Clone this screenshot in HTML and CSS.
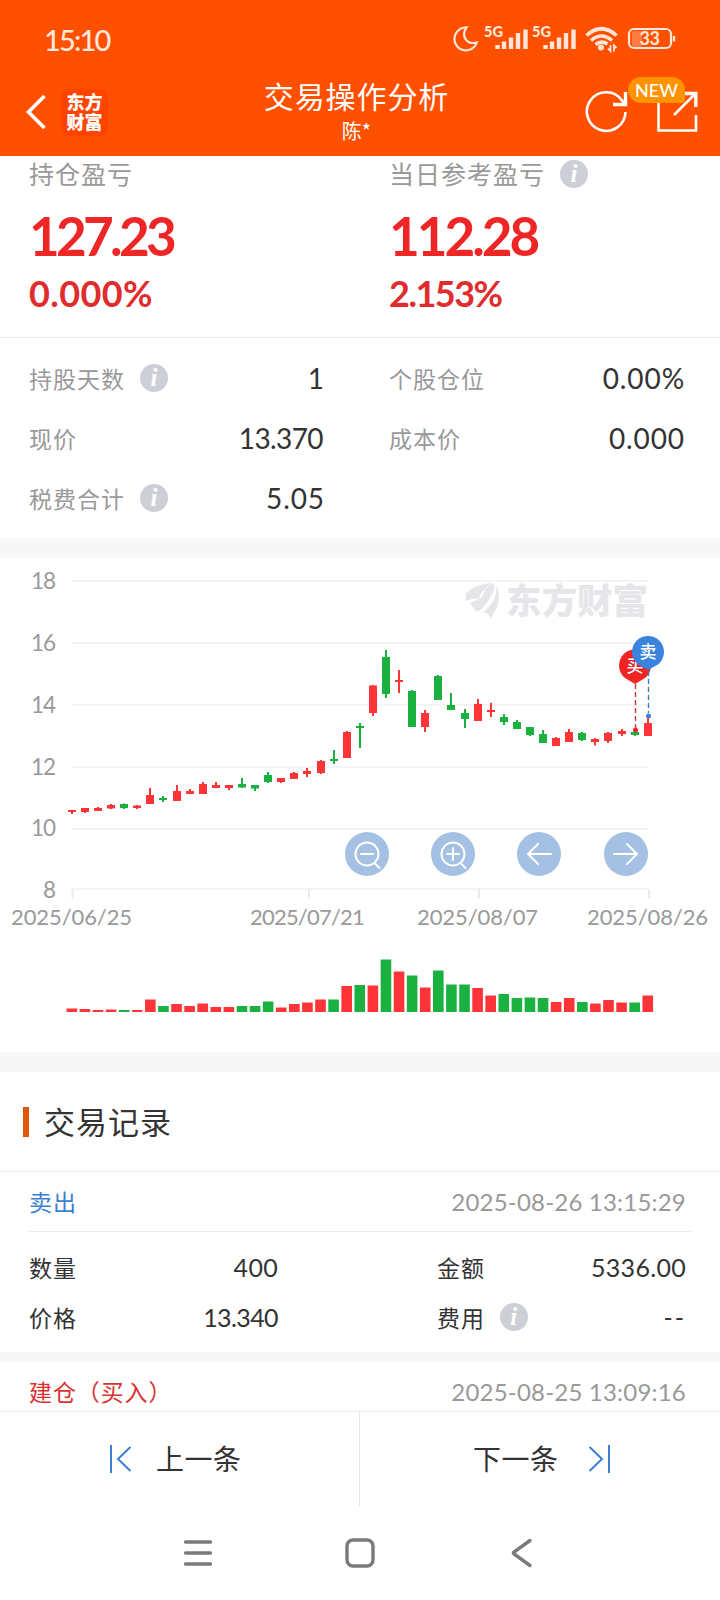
FILE: index.html
```html
<!DOCTYPE html>
<html lang="zh-CN">
<head>
  <meta charset="UTF-8">
  <meta name="viewport" content="width=device-width, initial-scale=1.0">
  <title>交易操作分析</title>
  <link rel="stylesheet" href="styles.css">
</head>
<body>
  <header class="header">
    <div class="status-bar">
      <span class="clock">15:10</span>
      <svg class="status-icons" viewBox="450 18 228 42" width="228" height="42">
        <path class="line" d="M464.500 27.500 A11.500 11.500 0 1 0 476.800 42.500 C467 45 460.500 36.500 466.500 27.300 Z"/>
        <text class="net" x="484" y="37">5G</text>
        <path class="bars" d="M497.500 45V49M504 41.500V49M511 37.500V49M518 33V49M525.500 29.500V49"/>
        <text class="net" x="532" y="37">5G</text>
        <path class="bars" d="M545.500 45V49M552 41.500V49M559 37.500V49M566 33V49M573.500 29.500V49"/>
        <path class="wifi" d="M586.500 35.500Q601.500 22 616.500 35.500M591 40.500Q601.500 31.500 612 40.500M595.500 44.500Q601.500 40 607.500 44"/>
        <circle class="solid" cx="601" cy="47.500" r="3"/>
        <path class="arrows" d="M610.500 45V51L608 48.500M614 51.500V45.500L616.500 48"/>
        <rect class="solid dim" x="632" y="31" width="10" height="16" rx="3"/>
        <rect class="battery" x="629" y="29" width="42" height="19" rx="5"/>
        <path class="tip" d="M674 36V41.500"/>
        <text class="percent" x="649.500" y="44.500" text-anchor="middle">33</text>
      </svg>
    </div>
    <div class="nav-bar">
      <div class="nav-left">
        <svg class="back" viewBox="0 0 22 36" width="22" height="36"><path d="M19.500 2L3.500 18L19.500 34"/></svg>
        <div class="logo">东方<br>财富</div>
      </div>
      <div class="nav-title">
        <h1>交易操作分析</h1>
        <p>陈*</p>
      </div>
      <div class="nav-right">
        <svg viewBox="584 88 116 46" width="116" height="46">
          <path d="M625.500 112A19.300 19.300 0 1 1 622 100.500L626 104"/>
          <path class="thick" d="M625.500 92V104.500H613"/>
          <path d="M658.500 98V130.500H696V115M674 115L695 94"/>
          <path class="thick" d="M682 93.500H695.800V107"/>
        </svg>
        <span class="badge">NEW</span>
      </div>
    </div>
  </header>

  <main class="content">
    <section class="profit">
      <div class="profit-item">
        <div class="profit-label">持仓盈亏</div>
        <div class="profit-value">127.23</div>
        <div class="profit-rate">0.000%</div>
      </div>
      <div class="profit-item">
        <div class="profit-label">当日参考盈亏<span class="info">i</span></div>
        <div class="profit-value wide">112.28</div>
        <div class="profit-rate tight">2.153%</div>
      </div>
    </section>

    <section class="details">
      <div class="detail"><span class="label">持股天数</span><span class="info">i</span><span class="value">1</span></div>
      <div class="detail"><span class="label">个股仓位</span><span class="value">0.00%</span></div>
      <div class="detail"><span class="label">现价</span><span class="value tight">13.370</span></div>
      <div class="detail"><span class="label">成本价</span><span class="value">0.000</span></div>
      <div class="detail"><span class="label">税费合计</span><span class="info">i</span><span class="value">5.05</span></div>
    </section>

    <section class="chart">
      <svg viewBox="0 558 720 494" width="720" height="494">
        <path class="grid-line" d="M72 581H648M72 643H648M72 705H648M72 767H648M72 829H648M72 889H648"/>
        <path class="tick" d="M72.500 889V899M309 889V899M479 889V899M649 889V899"/>
        <g class="axis" text-anchor="end">
          <text x="55" y="589">18</text>
          <text x="55" y="651">16</text>
          <text x="55" y="713">14</text>
          <text x="55" y="775">12</text>
          <text x="55" y="836">10</text>
          <text x="55" y="898">8</text>
        </g>
        <g class="axis dates" text-anchor="middle">
          <text x="71.500" y="925">2025/06/25</text>
          <text class="tight" x="307" y="925">2025/07/21</text>
          <text x="477.500" y="925">2025/08/07</text>
          <text x="647.500" y="925">2025/08/26</text>
        </g>
        <g class="watermark">
          <path d="M466 593Q478 583 492 583Q481 590 479 599Q472 598 466 601Z"/>
          <path d="M493 583Q497 588 490 598Q482 611 476 612Q474 608 470 603Q478 600 482 597Q485 587 493 583Z"/>
          <path d="M495 584Q502 596 497 607Q493 615 491 619Q489 613 483 612Q500 599 495 584Z"/>
          <text x="506" y="614">东方财富</text>
        </g>
        <g id="candles"></g>
        <g id="volumes"></g>

        <path class="dash buy-line" d="M635.500 684V728"/>
        <circle class="buy" cx="635.500" cy="730" r="2.500"/>
        <path class="buy" d="M635 684L625 678A16 16 0 1 1 645 678Z"/>
        <text class="pin" x="635" y="672">买</text>
        <path class="dash sell-line" d="M648.500 671V713"/>
        <circle class="sell" cx="648.500" cy="716" r="2.500"/>
        <path class="sell" d="M648 670L638 664.500A16 16 0 1 1 658 664.500Z"/>
        <text class="pin" x="648" y="658">卖</text>

        <g class="tool" transform="translate(367 854)">
          <circle class="disc" r="22"/><circle r="11.500"/><path d="M-6 0H6M7.500 9L12.500 14"/>
        </g>
        <g class="tool" transform="translate(453 854)">
          <circle class="disc" r="22"/><circle r="11.500"/><path d="M-6 0H6M0 -6V6M7.500 9L12.500 14"/>
        </g>
        <g class="tool" transform="translate(539 854)">
          <circle class="disc" r="22"/><path d="M12 0H-11M-1 -10L-11 0L-1 10"/>
        </g>
        <g class="tool" transform="translate(626 854)">
          <circle class="disc" r="22"/><path d="M-12 0H11M1 -10L11 0L1 10"/>
        </g>
      </svg>
    </section>

    <section class="records">
      <h2>交易记录</h2>
      <div class="record">
        <div class="record-head"><span class="sell-text">卖出</span><time>2025-08-26 13:15:29</time></div>
        <div class="record-body">
          <div class="cell"><span>数量</span><b>400</b></div>
          <div class="cell"><span>金额</span><b>5336.00</b></div>
          <div class="cell"><span>价格</span><b class="tight">13.340</b></div>
          <div class="cell"><span>费用</span><i class="info">i</i><b class="empty">--</b></div>
        </div>
      </div>
      <div class="record">
        <div class="record-head"><span class="buy-text">建仓（买入）</span><time>2025-08-25 13:09:16</time></div>
      </div>
    </section>
  </main>

  <footer class="pager">
    <button class="prev">
      <svg viewBox="0 0 22 30" width="22" height="30"><path d="M1 1V29M20.500 3L8 15L20.500 27"/></svg>
      <span>上一条</span>
    </button>
    <button class="next">
      <span>下一条</span>
      <svg viewBox="0 0 22 30" width="22" height="30"><path d="M21 1V29M1.500 3L14 15L1.500 27"/></svg>
    </button>
  </footer>

  <nav class="system-nav">
    <svg viewBox="0 0 30 30" width="30" height="30"><path d="M2.500 4H27.500M2.500 15H27.500M2.500 26H27.500"/></svg>
    <svg viewBox="0 0 30 30" width="30" height="30"><rect x="2" y="2" width="26" height="26" rx="6"/></svg>
    <svg viewBox="0 0 30 30" width="30" height="30"><path d="M23 2.500L7 14Q6 15 7 16L23 27.500"/></svg>
  </nav>

  <script src="chart.js"></script>
</body>
</html>
```

FILE: styles.css
```css
* {
  margin: 0;
  padding: 0;
  box-sizing: border-box;
}

body {
  width: 720px;
  height: 1600px;
  display: flex;
  flex-direction: column;
  overflow: hidden;
  font-family: Lato, "Noto Sans CJK SC", sans-serif;
  background-color: #fff;
  color: #333;
}

svg {
  display: block;
  fill: none;
}

/* header */
.header {
  height: 156px;
  flex-shrink: 0;
  background-color: #ff5000;
  color: #fff;
}

.status-bar {
  height: 78px;
  padding: 0 42px 0 44px;
  display: flex;
  justify-content: space-between;
  align-items: center;
}

.clock {
  font-size: 29px;
  font-weight: 500;
  letter-spacing: -1.8px;
  color: #ffe9dc;
}

.status-icons .line,
.status-icons .battery {
  stroke: #ffe6d9;
  stroke-width: 2.2;
}

.status-icons .bars,
.status-icons .wifi {
  stroke: #ffe6d9;
  stroke-width: 4.4;
}

.status-icons .wifi {
  stroke-width: 3.6;
}

.status-icons .tip {
  stroke: #ffe6d9;
  stroke-width: 2.4;
}

.status-icons .arrows {
  stroke: #ffe6d9;
  stroke-width: 1.8;
}

.status-icons .solid {
  fill: #ffe6d9;
}

.status-icons .dim {
  opacity: 0.3;
}

.status-icons .net {
  font-size: 14.5px;
  font-weight: 900;
  fill: #ffe6d9;
}

.status-icons .percent {
  font-size: 18px;
  font-weight: 700;
  letter-spacing: -0.5px;
  fill: #ffe6d9;
}

.nav-bar {
  height: 78px;
  display: grid;
  grid-template-columns: 200px 1fr 200px;
  padding-right: 20px;
  padding-left: 25px;
}

.nav-left {
  display: flex;
  align-items: center;
  height: 68px;
  gap: 14px;
}

.back path {
  stroke: #fff;
  stroke-width: 3.6;
}

.logo {
  width: 47px;
  height: 47px;
  border-radius: 8px;
  background-color: #ff4400;
  font-size: 18px;
  font-weight: 900;
  line-height: 20px;
  padding-top: 3px;
  text-align: center;
}

.nav-title {
  display: flex;
  flex-direction: column;
  align-items: center;
  padding-right: 12px;
}

.nav-title h1 {
  font-size: 30px;
  font-weight: 400;
  letter-spacing: 0.9px;
  line-height: 36px;
  white-space: nowrap;
}

.nav-title p {
  font-family: "Noto Sans CJK SC", sans-serif;
  font-size: 20px;
  line-height: 34px;
}

.nav-right {
  position: relative;
  display: flex;
  justify-content: flex-end;
  padding-top: 10px;
}

.nav-right path {
  stroke: #fff;
  stroke-width: 2.6;
}

.nav-right .thick {
  stroke-width: 3.4;
}

.badge {
  position: absolute;
  top: -1px;
  right: 15px;
  width: 57px;
  height: 26px;
  border-radius: 13px 13px 3px 13px;
  background-color: #ff9300;
  font-size: 18px;
  line-height: 27px;
  font-weight: 500;
  padding-left: 7px;
}

/* profit */
.content {
  flex: 1;
  overflow: hidden;
}

.profit {
  height: 182px;
  display: grid;
  grid-template-columns: 360px 360px;
  border-bottom: 1px solid #ebebeb;
}

.profit-item {
  padding-left: 29px;
}

.profit-label {
  height: 36px;
  display: flex;
  align-items: center;
  font-size: 25px;
  letter-spacing: 1px;
  line-height: 36px;
  padding-bottom: 1px;
  color: #999;
}

.profit-value {
  height: 88px;
  line-height: 88px;
  font-size: 53px;
  font-weight: 700;
  letter-spacing: -3.7px;
  color: #ee2626;
}

.profit-value.wide {
  letter-spacing: -3px;
}

.profit-rate {
  line-height: 26px;
  font-size: 36px;
  font-weight: 700;
  letter-spacing: 0.4px;
  color: #e02c2c;
}

.profit-rate.tight {
  letter-spacing: -1.5px;
}

.info {
  width: 28px;
  height: 28px;
  flex-shrink: 0;
  margin-left: 15px;
  border-radius: 50%;
  background-color: #ccd0d6;
  color: #fff;
  font: italic bold 25px/27px "Liberation Serif", serif;
  letter-spacing: 0;
  text-align: center;
}

/* details */
.details {
  height: 200px;
  display: grid;
  grid-template-columns: 360px 360px;
  grid-auto-rows: 60px;
  padding-top: 10px;
}

.detail {
  display: flex;
  align-items: center;
  padding: 0 35px 0 29px;
}

.label {
  font-size: 23px;
  letter-spacing: 1px;
  color: #999;
}

.value {
  margin-left: auto;
  font-size: 28px;
  letter-spacing: 0.9px;
}

.value.tight {
  letter-spacing: -0.6px;
  margin-right: 2px;
}

/* chart */
.chart {
  height: 534px;
  border-top: 20px solid #f7f7f7;
  border-bottom: 20px solid #f7f7f7;
}

.grid-line {
  stroke: #f4f4f4;
  stroke-width: 2;
}

.tick {
  stroke: #ebebeb;
  stroke-width: 2;
}

.axis {
  font-size: 22.5px;
  letter-spacing: -1px;
  fill: #999;
}

.dates {
  font-size: 22px;
  letter-spacing: -0.1px;
}

.dates .tight {
  letter-spacing: -0.8px;
}

.watermark {
  fill: #e6e6ea;
}

.watermark text {
  font-size: 35.5px;
  font-weight: 900;
}

.up {
  fill: #ff3438;
}

.down {
  fill: #1bb141;
}

.dash {
  stroke-width: 1.4;
  stroke-dasharray: 5 3;
}

.buy {
  fill: #f02323;
}

.sell {
  fill: #3a84e0;
}

.buy-line {
  stroke: #c93a3a;
}

.sell-line {
  stroke: #3f79ad;
}

.pin {
  font-size: 17px;
  font-weight: 500;
  text-anchor: middle;
  fill: #fff;
}

.tool {
  stroke: #fff;
  stroke-width: 2;
  stroke-linecap: round;
  stroke-linejoin: round;
}

.tool .disc {
  fill: #a4c1e4;
  stroke: none;
}

/* records */
.records h2 {
  height: 100px;
  display: flex;
  align-items: center;
  padding-left: 23px;
  padding-bottom: 2px;
  border-bottom: 1px solid #ebebeb;
  font-size: 31px;
  font-weight: 400;
  letter-spacing: 1px;
}

.records h2::before {
  content: "";
  width: 6px;
  height: 30px;
  margin: 2px 15px 0 0;
  background-color: #e0580c;
}

.record {
  border-bottom: 10px solid #f7f7f7;
}

.record-head {
  height: 60px;
  margin: 0 29px;
  padding: 0 5px 2px 0;
  display: flex;
  justify-content: space-between;
  align-items: center;
  border-bottom: 1px solid #ebebeb;
  font-size: 23px;
  letter-spacing: 0.9px;
}

.record-head time {
  padding-top: 2px;
  color: #999;
  font-size: 24px;
  letter-spacing: 0.2px;
}

.sell-text {
  color: #3a80d2;
}

.buy-text {
  color: #dc2f2f;
}

.record-body {
  height: 120px;
  display: grid;
  grid-template-columns: 249px 249px;
  grid-auto-rows: 50px;
  column-gap: 159px;
  padding: 10px 34px 0 29px;
}

.cell {
  display: flex;
  align-items: center;
  font-size: 23px;
  letter-spacing: 0.9px;
}

.cell b {
  margin-left: auto;
  font-size: 25px;
  font-weight: 400;
  letter-spacing: 0.3px;
}

.cell .tight {
  letter-spacing: -0.6px;
}

.cell .empty {
  letter-spacing: 2px;
}

/* footer */
.pager {
  height: 95px;
  flex-shrink: 0;
  display: grid;
  grid-template-columns: 1fr 1fr;
  border-top: 1px solid #ebebeb;
  background-color: #fff;
}

.pager button {
  display: flex;
  align-items: center;
  gap: 24px;
  border: none;
  background: none;
  font-family: inherit;
  font-size: 28px;
  letter-spacing: 0.5px;
  color: #333;
}

.pager span {
  padding-bottom: 2px;
}

.pager .prev {
  padding-left: 110px;
  border-right: 1px solid #e6e6e6;
}

.pager .next {
  padding-left: 113px;
  gap: 29px;
}

.pager path {
  stroke: #3a80d2;
  stroke-width: 2;
}

.system-nav {
  height: 94px;
  flex-shrink: 0;
  display: flex;
  justify-content: space-between;
  align-items: center;
  padding: 0 183px 0 183px;
}

.system-nav svg {
  stroke: #7a7a7a;
  stroke-width: 3.4;
  stroke-linecap: round;
}
```

FILE: chart.js
```js
// direction, high, body top, body bottom, low, volume top
const days = [
  ['up', 810, 810, 812, 814, 1008.5],
  ['up', 808, 808, 812, 813, 1009],
  ['up', 807, 808, 811, 811, 1010],
  ['up', 804, 805, 808.5, 809, 1009.5],
  ['down', 803.5, 804, 808, 809, 1010],
  ['up', 805, 805.5, 808, 809, 1010],
  ['up', 788, 795, 804, 804, 999.5],
  ['down', 796, 798, 800, 802, 1006],
  ['up', 785, 791, 801, 801, 1004],
  ['up', 789, 791, 794, 794, 1006],
  ['up', 782, 784, 794, 794, 1003.5],
  ['up', 782, 785, 788, 788, 1007],
  ['up', 785, 785, 788, 790, 1007],
  ['down', 778, 784, 787.5, 788, 1006],
  ['down', 785, 785, 788.5, 791, 1006],
  ['down', 772, 775, 782, 783, 1001.5],
  ['up', 778, 778, 782, 783, 1007.5],
  ['up', 772, 773, 779, 779, 1004],
  ['up', 768, 771, 774, 777, 1002.5],
  ['up', 760, 761, 773, 774, 999.5],
  ['down', 750, 759, 761, 764, 999.5],
  ['up', 731, 732, 758, 758, 986],
  ['down', 723, 726, 728, 748, 985],
  ['up', 685, 685.5, 713, 716, 985.5],
  ['down', 650, 657, 694, 698, 959.5],
  ['up', 670, 680, 682, 693, 971.5],
  ['down', 690, 691, 727, 727, 975.5],
  ['up', 710, 713, 727, 732, 987.5],
  ['down', 675, 676, 700, 700, 970.5],
  ['down', 693, 705, 710, 710, 984.5],
  ['down', 709, 713, 719, 728, 984.5],
  ['up', 699, 704, 721, 721, 988],
  ['up', 703, 710, 712, 717, 995.5],
  ['down', 714, 717, 722, 725, 994],
  ['down', 720, 722, 729, 729, 998],
  ['down', 727, 727, 735, 736, 997.5],
  ['down', 730, 734, 743, 743, 998],
  ['up', 737, 738, 746, 746, 1002],
  ['up', 729, 732, 742, 742, 998],
  ['down', 732, 733, 740, 741, 1002],
  ['up', 738, 739, 742, 745.5, 1003.5],
  ['up', 732, 733, 741, 743, 1000],
  ['up', 729, 731, 734, 736, 1002.5],
  ['down', 731, 732, 735, 736, 1002.5],
  ['up', 718, 723, 736, 736, 995.5]
];

const svgNS = 'http://www.w3.org/2000/svg';
const candles = document.getElementById('candles');
const volumes = document.getElementById('volumes');

function addRect(parent, className, x, y, width, height) {
  const rect = document.createElementNS(svgNS, 'rect');
  rect.setAttribute('class', className);
  rect.setAttribute('x', x);
  rect.setAttribute('y', y);
  rect.setAttribute('width', width);
  rect.setAttribute('height', height);
  parent.appendChild(rect);
}

days.forEach(([dir, high, top, bottom, low, volume], i) => {
  const center = 71.8 + i * 13.09;
  const x = Math.round(center);
  addRect(candles, dir, x - 1, high, 2, low - high);
  addRect(candles, dir, x - 4, top, 8, bottom - top);
  addRect(volumes, dir, center - 5.3, volume, 10.6, 1012 - volume);
});
```
